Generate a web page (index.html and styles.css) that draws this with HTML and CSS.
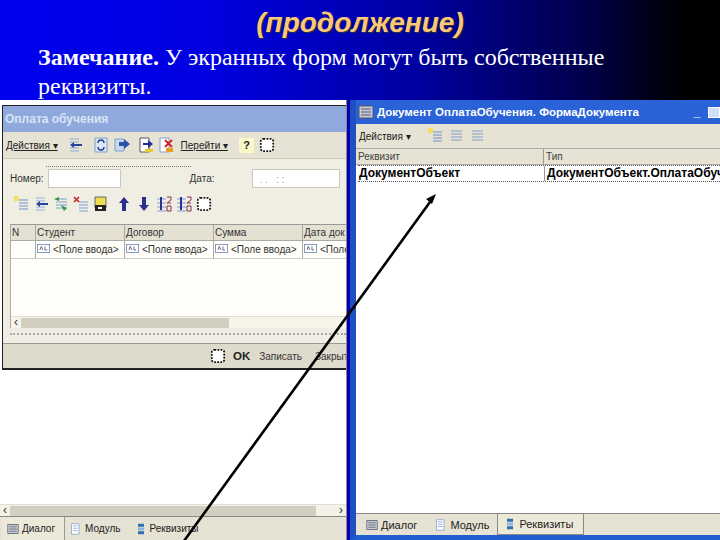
FILE: index.html
```html
<!DOCTYPE html>
<html lang="en">
<head>
<meta charset="UTF-8">
<title>Экранные формы</title>
<link rel="stylesheet" href="styles.css">
</head>
<body>
<svg class="defs" width="0" height="0">
  <symbol id="i-list" viewBox="0 0 16 16"><path d="M3 3h11M3 6h11M3 9h11M3 12h11" stroke="#7f9fd0" fill="none"/></symbol>
  <symbol id="i-back" viewBox="0 0 16 16"><path d="M3 2h9M3 5h9M3 11h9M3 14h9" stroke="#8fb0d8" fill="none"/><path d="M15 7H7V5L3 8l4 3V9h8z" fill="#2a3f9a"/></symbol>
  <symbol id="i-new" viewBox="0 0 16 16"><path d="M6 4h9M6 7h9M6 10h9M6 13h9" stroke="#6f8fc8" fill="none"/><path d="M1 0h5v5H1z" fill="#f4e060"/></symbol>
  <symbol id="i-copy" viewBox="0 0 16 16"><path d="M3 3h11M3 6h11M3 9h11M3 12h11" stroke="#7f9fd0" fill="none"/><path d="M1 3l5-2v4zM8 9l6 3-3 3z" fill="#2f9a4a"/></symbol>
  <symbol id="i-del" viewBox="0 0 16 16"><path d="M6 6h9M6 9h9M6 12h9M6 15h9" stroke="#7f9fd0" fill="none"/><path d="M1 1l5 5M6 1L1 6" stroke="#d02020" stroke-width="1.6"/></symbol>
  <symbol id="i-dots" viewBox="0 0 18 18"><rect x="2" y="2" width="14" height="14" rx="3" fill="#fff" stroke="#111" stroke-width="2" stroke-dasharray="2 1.5"/></symbol>
  <symbol id="i-up" viewBox="0 0 16 16"><path d="M8 1l5 6H10v8H6V7H3z" fill="#2a2f90"/></symbol>
  <symbol id="i-down" viewBox="0 0 16 16"><path d="M8 15l5-6H10V1H6v8H3z" fill="#2a2f90"/></symbol>
  <symbol id="i-doc" viewBox="0 0 16 16"><path d="M2 1h10v14H2z" fill="#fff" stroke="#7f9fd0"/><path d="M4 4h6M4 7h6M4 10h6" stroke="#7f9fd0"/></symbol>
  <symbol id="i-refresh" viewBox="0 0 16 16"><path d="M2 1h12v14H2z" fill="#dce6f4" stroke="#7f9fd0"/><path d="M5 6a3 3 0 0 1 6 0M11 10a3 3 0 0 1-6 0" stroke="#26408f" fill="none" stroke-width="1.4"/></symbol>
  <symbol id="i-goto" viewBox="0 0 16 16"><path d="M1 2h9v12H1z" fill="#c8d8ee" stroke="#7f9fd0"/><path d="M5 5h5V2l6 5-6 5V9H5z" fill="#2a55a8"/></symbol>
  <symbol id="i-key" viewBox="0 0 16 16"><path d="M2 1h9v14H2z" fill="#fff" stroke="#556"/><path d="M5 6h5V3l5 4-5 4V8H5z" fill="#1f2f90"/><path d="M7 12h8v3H7z" fill="#e8c830"/></symbol>
  <symbol id="i-cross" viewBox="0 0 16 16"><path d="M2 1h9v14H2z" fill="#fff" stroke="#7f9fd0"/><path d="M7 3l7 7M14 3l-7 7" stroke="#d02020" stroke-width="1.8"/><path d="M8 11h7v4H8z" fill="#e8a020"/></symbol>
  <symbol id="i-move" viewBox="0 0 16 16"><path d="M2 1h11v11H2z" fill="#f0dc50" stroke="#667"/><path d="M2 9h11v6H2z" fill="#222"/><path d="M5 11h4v2H5z" fill="#fff"/></symbol>
  <symbol id="i-sort" viewBox="0 0 16 16"><path d="M1 3h9M1 7h9M1 11h9M1 15h9" stroke="#7f9fd0" fill="none"/><path d="M5 1v13" stroke="#2a2f90" stroke-width="2"/><path d="M11 1h4v3l-4 3h4M11 10h4v5h-4z" stroke="#803050" fill="none"/></symbol>
  <symbol id="i-dlg" viewBox="0 0 16 16"><path d="M1 2h14v12H1z" fill="#c8ccd8" stroke="#556"/><path d="M3 5h10M3 8h10M3 11h10" stroke="#556"/></symbol>
  <symbol id="i-attr" viewBox="0 0 16 16"><path d="M4 1h8v4H4z" fill="#2f6fb0"/><path d="M4 6h8v4H4z" fill="#8fb4dc"/><path d="M4 11h8v4H4z" fill="#2f6fb0"/></symbol>
  <symbol id="i-field" viewBox="0 0 18 12"><rect x=".5" y=".5" width="17" height="11" fill="#fff" stroke="#5a78b0"/><path d="M4 8l2-5 2 5M11 3v5h3" stroke="#335" fill="none"/></symbol>
</svg>

<div class="slide">
  <header class="head">
    <h1 class="title">(продолжение)</h1>
    <p class="note"><b>Замечание.</b> У экранных форм могут быть собственные реквизиты.</p>
  </header>

  <div class="stage">
    <section class="pane">
      <div class="form">
        <div class="caption">Оплата обучения</div>
        <div class="bar top">
          <span class="menu">Действия ▾</span>
          <svg class="ico first"><use href="#i-back"/></svg>
          <svg class="ico"><use href="#i-refresh"/></svg>
          <svg class="ico"><use href="#i-goto"/></svg>
          <svg class="ico"><use href="#i-key"/></svg>
          <svg class="ico"><use href="#i-cross"/></svg>
          <span class="menu go">Перейти ▾</span>
          <span class="help">?</span>
          <svg class="ico"><use href="#i-dots"/></svg>
        </div>
        <div class="body">
          <div class="dots-top"></div>
          <div class="fields">
            <span>Номер:</span><span class="input num"></span>
            <span class="date-label">Дата:</span><span class="input date">. . &nbsp; : :</span>
          </div>
          <div class="bar small">
            <svg class="ico"><use href="#i-new"/></svg>
            <svg class="ico"><use href="#i-back"/></svg>
            <svg class="ico"><use href="#i-copy"/></svg>
            <svg class="ico"><use href="#i-del"/></svg>
            <svg class="ico"><use href="#i-move"/></svg>
            <svg class="ico arrow-ico"><use href="#i-up"/></svg>
            <svg class="ico"><use href="#i-down"/></svg>
            <svg class="ico"><use href="#i-sort"/></svg>
            <svg class="ico"><use href="#i-sort"/></svg>
            <svg class="ico"><use href="#i-dots"/></svg>
          </div>
          <div class="grid">
            <div class="grid-head">
              <span class="c-n">N</span><span class="c-w">Студент</span><span class="c-w">Договор</span><span class="c-w">Сумма</span><span class="c-w">Дата док</span>
            </div>
            <div class="grid-row">
              <span class="c-n"></span>
              <span class="c-w"><svg class="fld"><use href="#i-field"/></svg>&lt;Поле ввода&gt;</span>
              <span class="c-w"><svg class="fld"><use href="#i-field"/></svg>&lt;Поле ввода&gt;</span>
              <span class="c-w"><svg class="fld"><use href="#i-field"/></svg>&lt;Поле ввода&gt;</span>
              <span class="c-w"><svg class="fld"><use href="#i-field"/></svg>&lt;Поле</span>
            </div>
            <div class="grid-empty"></div>
            <div class="hscroll"><span class="arrow">‹</span><span class="thumb"></span></div>
          </div>
          <div class="dotted"></div>
        </div>
        <div class="actions">
          <svg class="ico"><use href="#i-dots"/></svg>
          <b class="ok">OK</b><span>Записать</span><span class="close">Закрыть</span>
        </div>
      </div>
      <div class="pane-fill"></div>
      <div class="hscroll wide"><span class="arrow">‹</span><span class="thumb"></span><span class="arrow">›</span></div>
      <div class="tabs">
        <span class="tab on"><svg class="ico"><use href="#i-dlg"/></svg>Диалог</span>
        <span class="tab"><svg class="ico"><use href="#i-doc"/></svg>Модуль</span>
        <span class="tab"><svg class="ico"><use href="#i-attr"/></svg>Реквизиты</span>
      </div>
    </section>

    <section class="win">
      <div class="win-title">
        <svg class="ico"><use href="#i-dlg"/></svg>
        <span class="win-text">Документ ОплатаОбучения. ФормаДокумента</span>
        <span class="win-btn">_</span><span class="win-btn box"></span>
      </div>
      <div class="bar plain">
        <span class="menu flat">Действия ▾</span>
        <svg class="ico"><use href="#i-new"/></svg>
        <svg class="ico"><use href="#i-list"/></svg>
        <svg class="ico"><use href="#i-list"/></svg>
      </div>
      <div class="attr-head"><span class="a1">Реквизит</span><span class="a2">Тип</span></div>
      <div class="attr-row"><span class="a1">ДокументОбъект</span><span class="a2">ДокументОбъект.ОплатаОбуч</span></div>
      <div class="win-fill"></div>
      <div class="tabs right">
        <span class="tab"><svg class="ico"><use href="#i-dlg"/></svg>Диалог</span>
        <span class="tab"><svg class="ico"><use href="#i-doc"/></svg>Модуль</span>
        <span class="tab on"><svg class="ico"><use href="#i-attr"/></svg>Реквизиты</span>
      </div>
    </section>
  </div>

  <svg class="pointer" viewBox="0 0 720 540" width="720" height="540">
    <path d="M184 541L430 202" stroke="#000" stroke-width="2.6"/>
    <path d="M436 194l-10 5 6 5z" fill="#000"/>
  </svg>
</div>
</body>
</html>
```

FILE: styles.css
```css
* {
  box-sizing: border-box;
}

body {
  margin: 0;
  width: 720px;
  height: 540px;
  overflow: hidden;
  font-family: "Liberation Sans", Arial, sans-serif;
}

.defs {
  position: absolute;
}

.slide {
  position: relative;
  display: flex;
  flex-direction: column;
  width: 720px;
  height: 540px;
  background: linear-gradient(to right, #0000f0 0%, #0000e0 30%, #0000a0 58%, #000050 80%, #000 95%);
  overflow: hidden;
}

.head {
  height: 100px;
  flex: none;
}

.title {
  margin: 0;
  padding-top: 8px;
  text-align: center;
  font-size: 28px;
  line-height: 30px;
  font-style: italic;
  font-weight: bold;
  color: #fcc878;
  text-shadow: 1px 1px 1px #333;
}

.note {
  margin: 5px 0 0 38px;
  width: 640px;
  font-family: "Liberation Serif", "Times New Roman", serif;
  font-size: 24px;
  line-height: 29px;
  color: #fff;
}

.stage {
  flex: 1;
  display: flex;
  min-height: 0;
}

.pane {
  width: 347px;
  flex: none;
  display: flex;
  flex-direction: column;
  background: #fff;
  padding-top: 5px;
  border-right: 1px solid #8a8a8a;
}

.form {
  margin-left: 2px;
  height: 265px;
  display: flex;
  flex-direction: column;
  background: #ece9d8;
  border: 1px solid #222;
  border-right: 0;
  border-bottom: 2px solid #222;
  box-shadow: 0 3px 0 #888;
  font-size: 10px;
  color: #333;
  overflow: hidden;
}

.caption {
  height: 26px;
  flex: none;
  padding-left: 2px;
  background: #8fa9dc;
  color: #d8e4f6;
  font-size: 12px;
  font-weight: bold;
  line-height: 26px;
}

.bar {
  display: flex;
  align-items: center;
  gap: 5px;
  height: 26px;
  flex: none;
  padding-left: 3px;
  background: #e6e2d4;
}

.small {
  height: 24px;
  margin-top: 4px;
  padding-left: 3px;
  gap: 4px;
  background: none;
}

.plain {
  height: 25px;
  border-bottom: 1px solid #aaa;
}

.menu {
  font-size: 10px;
  text-decoration: underline;
  white-space: nowrap;
  color: #222;
}

.menu.flat {
  margin-right: 11px;
  text-decoration: none;
}

.first {
  margin-left: 4px;
}

.top .ico:nth-of-type(2) {
  margin-left: 5px;
}

.top .ico:nth-of-type(4) {
  margin-left: 3px;
}

.top .ico:nth-of-type(5) {
  margin-left: -1px;
}

.go {
  margin: 0 6px 0 2px;
}

.ico {
  width: 16px;
  height: 16px;
  flex: none;
}

.arrow-ico {
  margin-left: 3px;
}

.help {
  width: 15px;
  height: 15px;
  background: #fbf7c8;
  color: #223;
  font-size: 11px;
  font-weight: bold;
  line-height: 15px;
  text-align: center;
}

.body {
  flex: 1;
  min-height: 0;
  display: flex;
  flex-direction: column;
  padding: 7px 0 0 7px;
  border-top: 1px solid #cfcbb8;
  border-bottom: 1px solid #999;
  background: #f0eee2;
}

.dots-top {
  width: 145px;
  height: 1px;
  flex: none;
  margin: 0 0 1px 36px;
  border-top: 1px dotted #777;
}

.fields {
  display: flex;
  align-items: center;
  height: 20px;
  flex: none;
  font-size: 10px;
}

.input {
  display: block;
  height: 19px;
  background: #fff;
  border: 1px solid #c8c8c0;
}

.num {
  width: 73px;
  margin-left: 4px;
}

.date-label {
  margin-left: 69px;
}

.date {
  width: 88px;
  margin-left: 38px;
  padding-left: 6px;
  color: #999;
  line-height: 20px;
}

.grid {
  flex: 1;
  display: flex;
  flex-direction: column;
  margin-top: 8px;
  background: #fffef8;
  border-top: 1px solid #999;
  border-left: 1px solid #aaa;
  min-height: 0;
}

.grid-head,
.grid-row {
  display: flex;
  flex: none;
  white-space: nowrap;
  font-size: 10px;
}

.grid-head {
  height: 16px;
  background: #e4e1d2;
  line-height: 15px;
  border-bottom: 1px solid #aaa;
}

.grid-row {
  height: 18px;
  line-height: 17px;
  border-bottom: 1px solid #ccc;
}

.c-n {
  width: 25px;
  flex: none;
  padding-left: 1px;
  border-right: 1px solid #aaa;
}

.c-w {
  width: 89px;
  flex: none;
  padding-left: 1px;
  border-right: 1px solid #aaa;
  overflow: hidden;
}

.fld {
  width: 13px;
  height: 9px;
  margin-right: 3px;
}

.grid-empty {
  flex: 1;
}

.hscroll {
  display: flex;
  align-items: center;
  height: 12px;
  flex: none;
  background: #f7f5ea;
  border-top: 1px solid #ddd;
}

.arrow {
  width: 10px;
  flex: none;
  text-align: center;
  font-size: 12px;
  line-height: 11px;
  color: #333;
}

.thumb {
  width: 208px;
  height: 10px;
  background: #d2cfc0;
}

.wide .thumb {
  width: 306px;
  margin-right: 20px;
}

.wide {
  background: #f4f2e6;
}

.dotted {
  height: 7px;
  flex: none;
  margin-bottom: 8px;
  border-bottom: 2px dotted #aaa;
}

.actions {
  display: flex;
  align-items: center;
  gap: 9px;
  height: 24px;
  flex: none;
  background: #dedbcc;
  font-size: 10px;
  white-space: nowrap;
  overflow: hidden;
  padding-left: 207px;
}

.actions .ico {
  margin-right: -2px;
}

.ok {
  font-size: 11.5px;
  color: #222;
}

.close {
  margin-left: 4px;
}

.pane-fill,
.win-fill {
  flex: 1;
  background: #fff;
}

.tabs {
  display: flex;
  height: 24px;
  flex: none;
  padding-left: 2px;
  background: #e6e2d4;
  border-top: 1px solid #888;
  font-size: 10px;
  color: #222;
}

.tab {
  display: flex;
  align-items: center;
  gap: 3px;
  padding: 0 9px 0 5px;
  white-space: nowrap;
}

.tab .ico {
  width: 12px;
  height: 12px;
}

.tab.on {
  background: #ece9d8;
  border-right: 1px solid #999;
}

.win {
  margin-left: 3px;
  flex: 1;
  display: flex;
  flex-direction: column;
  background: #fff;
  border-left: 6px solid #1f4fc0;
  border-bottom: 5px solid #1f5fd0;
  min-width: 0;
  overflow: hidden;
}

.win-title {
  display: flex;
  align-items: center;
  gap: 3px;
  height: 24px;
  flex: none;
  padding-left: 2px;
  background: #2a62d8;
  color: #fff;
  font-size: 11.5px;
  font-weight: bold;
  white-space: nowrap;
}

.win-text {
  width: 312px;
  overflow: hidden;
}

.win-btn {
  width: 12px;
  margin-left: 0;
  text-align: center;
  font-size: 12px;
}

.box {
  height: 11px;
  margin-left: 2px;
  background: #cfe0ff;
  border: 1px solid #fff;
}

.attr-head,
.attr-row {
  display: flex;
  flex: none;
  white-space: nowrap;
  font-size: 10px;
  overflow: hidden;
}

.attr-head {
  height: 16px;
  background: #e6e2d4;
  color: #444;
  line-height: 15px;
  border-bottom: 1px solid #aaa;
}

.attr-row {
  height: 17px;
  margin: 0 0 0 2px;
  color: #000;
  font-size: 12px;
  font-weight: bold;
  line-height: 15px;
  border-top: 1px dotted #555;
  border-bottom: 1px dotted #555;
}

.a1 {
  width: 187px;
  flex: none;
  padding-left: 1px;
  border-right: 1px solid #999;
}

.attr-head .a1 {
  padding-left: 2px;
  width: 188px;
}

.a2 {
  padding-left: 2px;
}

.tabs.right {
  height: 22px;
  padding-left: 4px;
  font-size: 11px;
}

.tabs.right .tab {
  padding: 0 10px 0 6px;
}

.tabs.right .tab:nth-child(2) {
  padding-left: 8px;
  padding-right: 8px;
}

.tabs.right .tab.on {
  border: 1px solid #888;
  border-top: 0;
}

.pointer {
  position: absolute;
  left: 0;
  top: 0;
  pointer-events: none;
}
```
